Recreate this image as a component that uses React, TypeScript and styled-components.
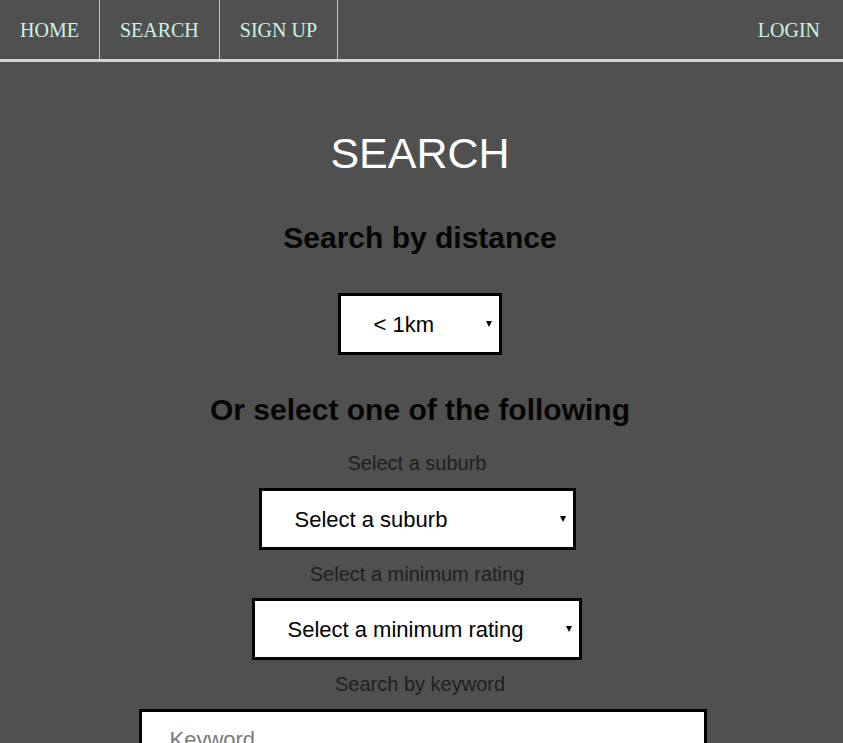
import React from "react";
import styled, { createGlobalStyle } from "styled-components";

const GlobalStyle = createGlobalStyle`
  html, body {
    margin: 0;
    padding: 0;
    background: #505050;
    overflow: hidden;
  }
  body {
    font-family: "Liberation Sans", Arial, sans-serif;
  }
  * { box-sizing: border-box; }
`;

const Nav = styled.nav`
  height: 62px;
  border-bottom: 3px solid #d3d3d3;
  background: #505050;
`;

const NavList = styled.ul`
  display: flex;
  margin: 0;
  padding: 0;
  list-style: none;
  height: 59px;
`;

const NavItem = styled.li<{ $right?: boolean }>`
  display: flex;
  border-right: ${(p) => (p.$right ? "none" : "1px solid #c4c4c4")};
  margin-left: ${(p) => (p.$right ? "auto" : "0")};
`;

const NavLink = styled.a<{ $right?: boolean }>`
  display: block;
  padding: 1px ${(p) => (p.$right ? "23px" : "20px")} 0 20px;
  line-height: 58px;
  font-family: "Liberation Serif", "Times New Roman", serif;
  font-size: 20px;
  color: #ccf2e6;
  text-decoration: none;
`;

const Main = styled.main`
  display: flex;
  flex-direction: column;
  align-items: center;
  padding: 66px 3px 40px 0;
`;

const Title = styled.h1`
  margin: 0;
  font-size: 43px;
  line-height: 50px;
  font-weight: normal;
  color: #ffffff;
`;

const SectionHeading = styled.h2<{ $top: number }>`
  margin: ${(p) => p.$top}px 0 0;
  font-size: 30px;
  line-height: 36px;
  font-weight: bold;
  color: #050505;
`;

const FilterGroup = styled.div`
  display: flex;
  flex-direction: column;
  align-items: center;
  margin-right: 6px;
`;

const FieldLabel = styled.label<{ $top: number }>`
  display: block;
  margin-top: ${(p) => p.$top}px;
  font-size: 20px;
  line-height: 24px;
  color: #1f1f1f;
`;

const SelectWrap = styled.div<{ $width: number; $top: number; $shift?: number }>`
  position: relative;
  width: ${(p) => p.$width}px;
  margin-top: ${(p) => p.$top}px;
  margin-right: ${(p) => p.$shift ?? 0}px;

  &::after {
    content: "";
    position: absolute;
    right: 10px;
    top: 50%;
    margin-top: -3px;
    border-left: 3px solid transparent;
    border-right: 3px solid transparent;
    border-top: 6px solid #000;
    pointer-events: none;
  }
`;

const Select = styled.select`
  appearance: none;
  -webkit-appearance: none;
  display: block;
  width: 100%;
  height: 62px;
  margin: 0;
  padding: 0 24px 0 33px;
  border: 3px solid #000;
  border-radius: 0;
  background: #ffffff;
  font-family: "Liberation Sans", Arial, sans-serif;
  font-size: 22px;
  color: #000;
  outline: none;
`;

const KeywordInput = styled.input`
  display: block;
  width: 568px;
  height: 62px;
  margin: 13px 0 0 5px;
  padding: 0 28px;
  border: 3px solid #000;
  border-radius: 0;
  background: #fff;
  font-family: "Liberation Sans", Arial, sans-serif;
  font-size: 22px;
  color: #000;
  outline: none;

  &::placeholder {
    color: #7a7a7a;
  }
`;

export default function App() {
  return (
    <>
      <GlobalStyle />
      <Nav>
        <NavList>
          <NavItem><NavLink href="#">HOME</NavLink></NavItem>
          <NavItem><NavLink href="#">SEARCH</NavLink></NavItem>
          <NavItem><NavLink href="#">SIGN UP</NavLink></NavItem>
          <NavItem $right><NavLink $right href="#">LOGIN</NavLink></NavItem>
        </NavList>
      </Nav>
      <Main>
        <Title>SEARCH</Title>
        <SectionHeading $top={42}>Search by distance</SectionHeading>
        <SelectWrap $width={164} $top={37} $shift={1}>
          <Select defaultValue="1">
            <option value="1">&lt; 1km</option>
            <option value="5">&lt; 5km</option>
            <option value="10">&lt; 10km</option>
          </Select>
        </SelectWrap>
        <SectionHeading $top={37}>Or select one of the following</SectionHeading>
        <FilterGroup>
          <FieldLabel $top={23}>Select a suburb</FieldLabel>
          <SelectWrap $width={317} $top={13}>
            <Select defaultValue="">
              <option value="">Select a suburb</option>
            </Select>
          </SelectWrap>
          <FieldLabel $top={12}>Select a minimum rating</FieldLabel>
          <SelectWrap $width={330} $top={12} $shift={1}>
            <Select defaultValue="">
              <option value="">Select a minimum rating</option>
              <option value="1">1</option>
              <option value="2">2</option>
              <option value="3">3</option>
              <option value="4">4</option>
              <option value="5">5</option>
            </Select>
          </SelectWrap>
        </FilterGroup>
        <FieldLabel $top={12}>Search by keyword</FieldLabel>
        <KeywordInput type="text" placeholder="Keyword" />
      </Main>
    </>
  );
}
